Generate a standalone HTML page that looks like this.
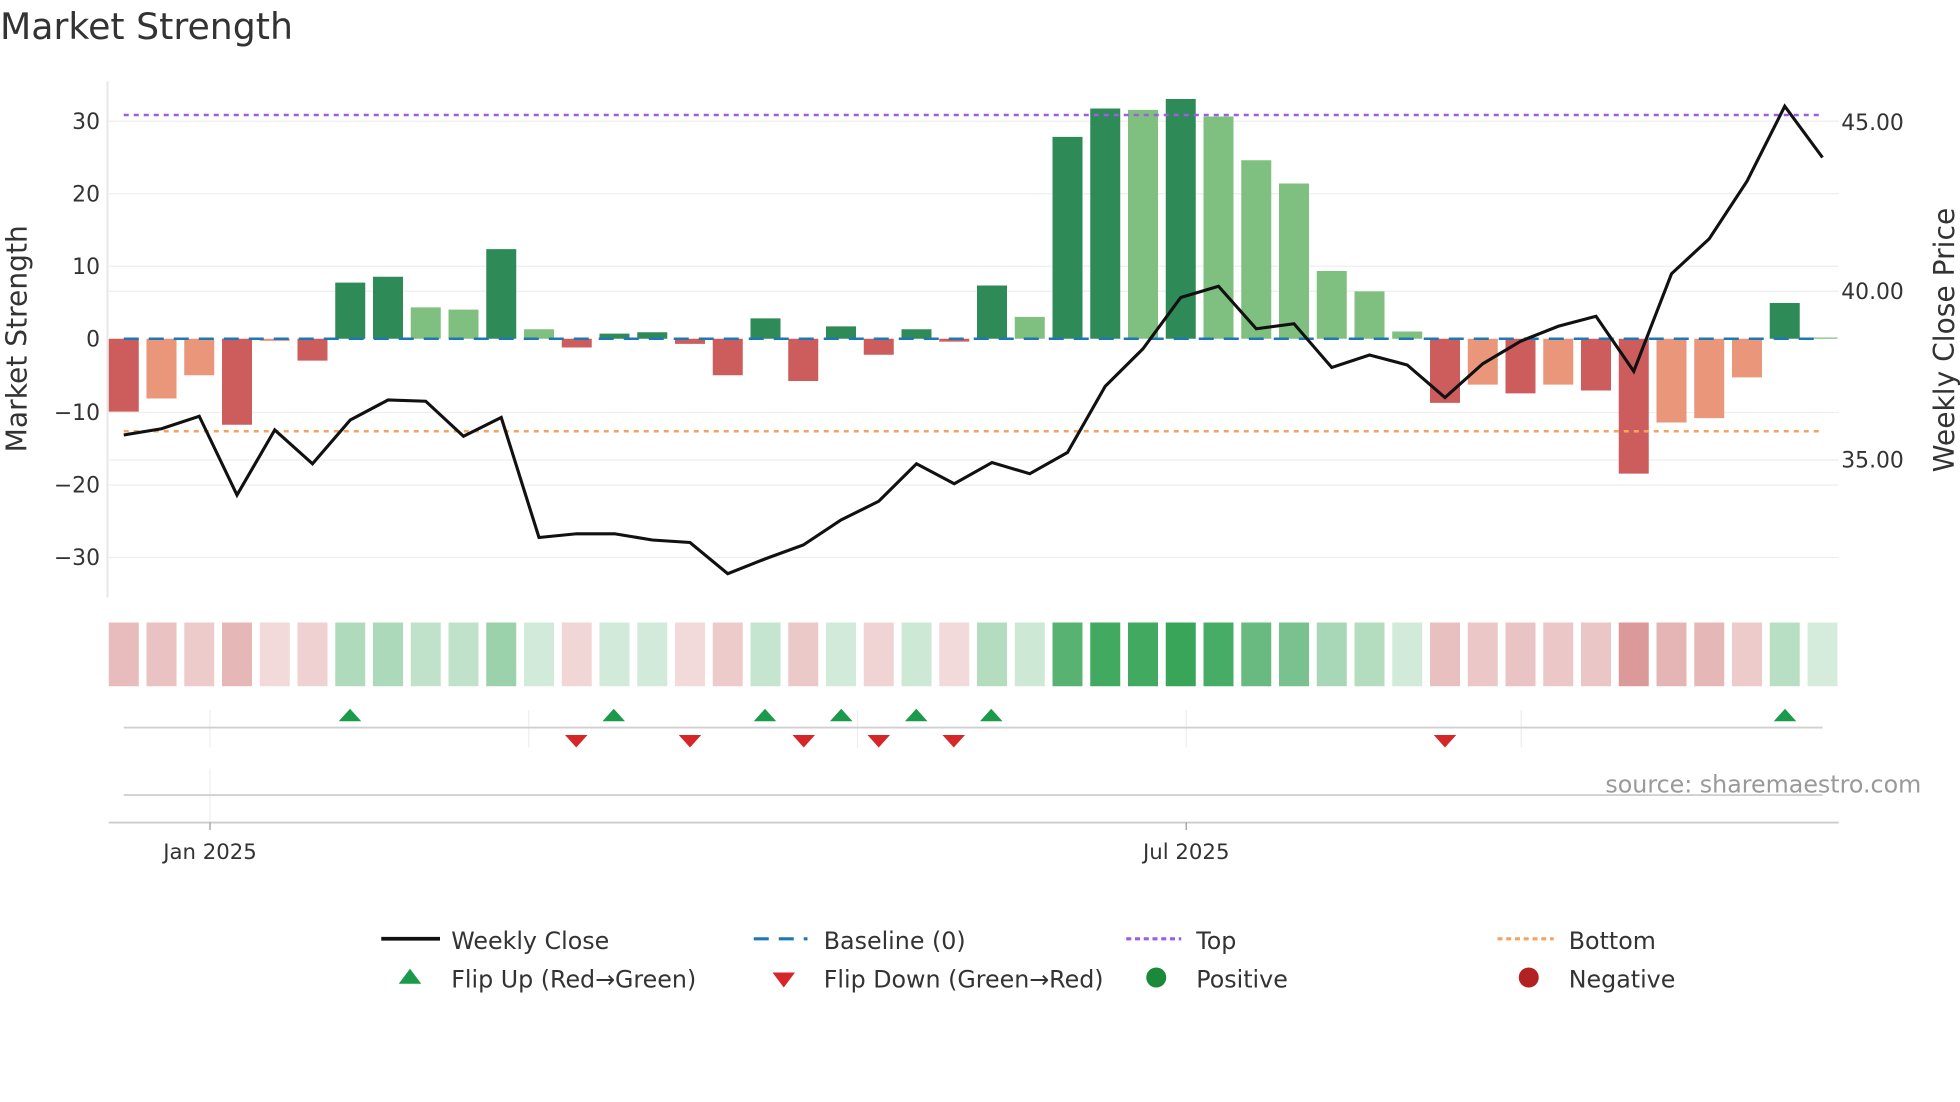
<!DOCTYPE html>
<html><head><meta charset="utf-8"><style>
html,body{margin:0;padding:0;background:#fff;width:1960px;height:1102px;overflow:hidden}
svg{display:block}
text{font-family:"DejaVu Sans","Liberation Sans",sans-serif}
</style></head><body>
<svg width="1960" height="1102" viewBox="0 0 1568 881.6" xmlns="http://www.w3.org/2000/svg">
<text x="0" y="31" font-size="29" fill="#333">Market Strength</text>
<!-- gridlines -->
<g stroke="#eeeeee" stroke-width="1">
<line x1="87" x2="1471" y1="97" y2="97"/><line x1="87" x2="1471" y1="155" y2="155"/><line x1="87" x2="1471" y1="213" y2="213"/><line x1="87" x2="1471" y1="330" y2="330"/><line x1="87" x2="1471" y1="388" y2="388"/><line x1="87" x2="1471" y1="446" y2="446"/>
<line x1="87" x2="1471" y1="233" y2="233"/><line x1="87" x2="1471" y1="368" y2="368"/>
</g>
<line x1="86" x2="86" y1="65" y2="478" stroke="#e6e6e6" stroke-width="1.5"/>
<g font-size="17.5" fill="#333" text-anchor="end">
<text x="80" y="103">30</text><text x="80" y="161">20</text><text x="80" y="219">10</text><text x="80" y="277">0</text><text x="80" y="336">−10</text><text x="80" y="394">−20</text><text x="80" y="452">−30</text>
</g>
<g font-size="17.5" fill="#333">
<text x="1473" y="104">45.00</text><text x="1473" y="239">40.00</text><text x="1473" y="374">35.00</text>
</g>
<text transform="translate(21,271) rotate(-90)" font-size="22.5" fill="#333" text-anchor="middle">Market Strength</text>
<text transform="translate(1563,272) rotate(-90)" font-size="22.5" fill="#333" text-anchor="middle">Weekly Close Price</text>
<!-- bars -->
<g>
<rect x="87" y="271" width="24" height="58.3" fill="#cd5c5c"/>
<rect x="117.2" y="271" width="24" height="47.8" fill="#e9967a"/>
<rect x="147.4" y="271" width="24" height="29.2" fill="#e9967a"/>
<rect x="177.6" y="271" width="24" height="68.8" fill="#cd5c5c"/>
<rect x="207.8" y="271" width="24" height="1.7" fill="#e9967a"/>
<rect x="238" y="271" width="24" height="17.5" fill="#cd5c5c"/>
<rect x="268.2" y="226.1" width="24" height="44.9" fill="#2e8b57"/>
<rect x="298.4" y="221.4" width="24" height="49.6" fill="#2e8b57"/>
<rect x="328.6" y="245.9" width="24" height="25.1" fill="#7fbf7f"/>
<rect x="358.8" y="247.7" width="24" height="23.3" fill="#7fbf7f"/>
<rect x="389" y="199.3" width="24" height="71.7" fill="#2e8b57"/>
<rect x="419.2" y="263.4" width="24" height="7.6" fill="#7fbf7f"/>
<rect x="449.4" y="271" width="24" height="7" fill="#cd5c5c"/>
<rect x="479.6" y="266.9" width="24" height="4.1" fill="#2e8b57"/>
<rect x="509.8" y="265.8" width="24" height="5.2" fill="#2e8b57"/>
<rect x="540" y="271" width="24" height="4.1" fill="#cd5c5c"/>
<rect x="570.2" y="271" width="24" height="29.2" fill="#cd5c5c"/>
<rect x="600.4" y="254.7" width="24" height="16.3" fill="#2e8b57"/>
<rect x="630.6" y="271" width="24" height="33.8" fill="#cd5c5c"/>
<rect x="660.8" y="261.1" width="24" height="9.9" fill="#2e8b57"/>
<rect x="691" y="271" width="24" height="12.8" fill="#cd5c5c"/>
<rect x="721.2" y="263.4" width="24" height="7.6" fill="#2e8b57"/>
<rect x="751.4" y="271" width="24" height="2.3" fill="#cd5c5c"/>
<rect x="781.6" y="228.4" width="24" height="42.6" fill="#2e8b57"/>
<rect x="811.8" y="253.5" width="24" height="17.5" fill="#7fbf7f"/>
<rect x="842" y="109.5" width="24" height="161.5" fill="#2e8b57"/>
<rect x="872.2" y="86.8" width="24" height="184.2" fill="#2e8b57"/>
<rect x="902.4" y="87.9" width="24" height="183.1" fill="#7fbf7f"/>
<rect x="932.6" y="79.2" width="24" height="191.8" fill="#2e8b57"/>
<rect x="962.8" y="93.2" width="24" height="177.8" fill="#7fbf7f"/>
<rect x="993" y="128.2" width="24" height="142.8" fill="#7fbf7f"/>
<rect x="1023.2" y="146.8" width="24" height="124.2" fill="#7fbf7f"/>
<rect x="1053.4" y="216.8" width="24" height="54.2" fill="#7fbf7f"/>
<rect x="1083.6" y="233.1" width="24" height="37.9" fill="#7fbf7f"/>
<rect x="1113.8" y="265.2" width="24" height="5.8" fill="#7fbf7f"/>
<rect x="1144" y="271" width="24" height="51.3" fill="#cd5c5c"/>
<rect x="1174.2" y="271" width="24" height="36.7" fill="#e9967a"/>
<rect x="1204.4" y="271" width="24" height="43.7" fill="#cd5c5c"/>
<rect x="1234.6" y="271" width="24" height="36.7" fill="#e9967a"/>
<rect x="1264.8" y="271" width="24" height="41.4" fill="#cd5c5c"/>
<rect x="1295" y="271" width="24" height="107.9" fill="#cd5c5c"/>
<rect x="1325.2" y="271" width="24" height="67" fill="#e9967a"/>
<rect x="1355.4" y="271" width="24" height="63.5" fill="#e9967a"/>
<rect x="1385.6" y="271" width="24" height="30.9" fill="#e9967a"/>
<rect x="1415.8" y="242.4" width="24" height="28.6" fill="#2e8b57"/>
<rect x="1446" y="270" width="24" height="1" fill="#7fbf7f"/>
</g>
<line x1="99" x2="1458" y1="271" y2="271" stroke="#1f77b4" stroke-width="2" stroke-dasharray="12,8"/>
<line x1="99" x2="1458" y1="92" y2="92" stroke="#9b5fe0" stroke-width="2" stroke-dasharray="4,4"/>
<line x1="99" x2="1458" y1="345" y2="345" stroke="#f4a460" stroke-width="2" stroke-dasharray="4,4"/>
<polyline fill="none" stroke="#111" stroke-width="2.5" stroke-linejoin="miter" points="99,348 129.2,343 159.4,333 189.6,396 219.8,344 250,371 280.2,336 310.4,320 340.6,321 370.8,349 401,334 431.2,430 461.4,427 491.6,427 521.8,432 552,434 582.2,459 612.4,447 642.6,436 672.8,416 703,401 733.2,371 763.4,387 793.6,370 823.8,379 854,362 884.2,309 914.4,279 944.6,238 974.8,229 1005,263 1035.2,259 1065.4,294 1095.6,284 1125.8,292 1156,318 1186.2,291 1216.4,273 1246.6,261 1276.8,253 1307,297 1337.2,219 1367.4,191 1397.6,145 1427.8,85 1458,126"/>
<!-- heatmap -->
<g>
<rect x="87" y="498" width="24" height="51" fill="#be4646" fill-opacity="0.36"/>
<rect x="117.2" y="498" width="24" height="51" fill="#be4646" fill-opacity="0.33"/>
<rect x="147.4" y="498" width="24" height="51" fill="#be4646" fill-opacity="0.28"/>
<rect x="177.6" y="498" width="24" height="51" fill="#be4646" fill-opacity="0.39"/>
<rect x="207.8" y="498" width="24" height="51" fill="#be4646" fill-opacity="0.2"/>
<rect x="238" y="498" width="24" height="51" fill="#be4646" fill-opacity="0.25"/>
<rect x="268.2" y="498" width="24" height="51" fill="#2ea050" fill-opacity="0.38"/>
<rect x="298.4" y="498" width="24" height="51" fill="#2ea050" fill-opacity="0.4"/>
<rect x="328.6" y="498" width="24" height="51" fill="#2ea050" fill-opacity="0.3"/>
<rect x="358.8" y="498" width="24" height="51" fill="#2ea050" fill-opacity="0.3"/>
<rect x="389" y="498" width="24" height="51" fill="#2ea050" fill-opacity="0.48"/>
<rect x="419.2" y="498" width="24" height="51" fill="#2ea050" fill-opacity="0.22"/>
<rect x="449.4" y="498" width="24" height="51" fill="#be4646" fill-opacity="0.22"/>
<rect x="479.6" y="498" width="24" height="51" fill="#2ea050" fill-opacity="0.22"/>
<rect x="509.8" y="498" width="24" height="51" fill="#2ea050" fill-opacity="0.22"/>
<rect x="540" y="498" width="24" height="51" fill="#be4646" fill-opacity="0.2"/>
<rect x="570.2" y="498" width="24" height="51" fill="#be4646" fill-opacity="0.28"/>
<rect x="600.4" y="498" width="24" height="51" fill="#2ea050" fill-opacity="0.27"/>
<rect x="630.6" y="498" width="24" height="51" fill="#be4646" fill-opacity="0.29"/>
<rect x="660.8" y="498" width="24" height="51" fill="#2ea050" fill-opacity="0.22"/>
<rect x="691" y="498" width="24" height="51" fill="#be4646" fill-opacity="0.23"/>
<rect x="721.2" y="498" width="24" height="51" fill="#2ea050" fill-opacity="0.24"/>
<rect x="751.4" y="498" width="24" height="51" fill="#be4646" fill-opacity="0.2"/>
<rect x="781.6" y="498" width="24" height="51" fill="#2ea050" fill-opacity="0.36"/>
<rect x="811.8" y="498" width="24" height="51" fill="#2ea050" fill-opacity="0.24"/>
<rect x="842" y="498" width="24" height="51" fill="#2ea050" fill-opacity="0.8"/>
<rect x="872.2" y="498" width="24" height="51" fill="#2ea050" fill-opacity="0.9"/>
<rect x="902.4" y="498" width="24" height="51" fill="#2ea050" fill-opacity="0.9"/>
<rect x="932.6" y="498" width="24" height="51" fill="#2ea050" fill-opacity="0.95"/>
<rect x="962.8" y="498" width="24" height="51" fill="#2ea050" fill-opacity="0.88"/>
<rect x="993" y="498" width="24" height="51" fill="#2ea050" fill-opacity="0.72"/>
<rect x="1023.2" y="498" width="24" height="51" fill="#2ea050" fill-opacity="0.64"/>
<rect x="1053.4" y="498" width="24" height="51" fill="#2ea050" fill-opacity="0.42"/>
<rect x="1083.6" y="498" width="24" height="51" fill="#2ea050" fill-opacity="0.36"/>
<rect x="1113.8" y="498" width="24" height="51" fill="#2ea050" fill-opacity="0.22"/>
<rect x="1144" y="498" width="24" height="51" fill="#be4646" fill-opacity="0.34"/>
<rect x="1174.2" y="498" width="24" height="51" fill="#be4646" fill-opacity="0.3"/>
<rect x="1204.4" y="498" width="24" height="51" fill="#be4646" fill-opacity="0.32"/>
<rect x="1234.6" y="498" width="24" height="51" fill="#be4646" fill-opacity="0.3"/>
<rect x="1264.8" y="498" width="24" height="51" fill="#be4646" fill-opacity="0.31"/>
<rect x="1295" y="498" width="24" height="51" fill="#be4646" fill-opacity="0.55"/>
<rect x="1325.2" y="498" width="24" height="51" fill="#be4646" fill-opacity="0.4"/>
<rect x="1355.4" y="498" width="24" height="51" fill="#be4646" fill-opacity="0.39"/>
<rect x="1385.6" y="498" width="24" height="51" fill="#be4646" fill-opacity="0.28"/>
<rect x="1415.8" y="498" width="24" height="51" fill="#2ea050" fill-opacity="0.34"/>
<rect x="1446" y="498" width="24" height="51" fill="#2ea050" fill-opacity="0.2"/>
</g>
<!-- markers region -->
<g stroke="#eeeeee" stroke-width="1">
<line x1="168" x2="168" y1="568" y2="598"/><line x1="423" x2="423" y1="568" y2="598"/><line x1="686" x2="686" y1="568" y2="598"/><line x1="949" x2="949" y1="568" y2="598"/><line x1="1217" x2="1217" y1="568" y2="598"/>
<line x1="168" x2="168" y1="615" y2="658"/>
</g>
<line x1="99" x2="1458" y1="582" y2="582" stroke="#d0d0d0" stroke-width="1.5"/>
<line x1="99" x2="1458" y1="636" y2="636" stroke="#d0d0d0" stroke-width="1.5"/>
<line x1="87" x2="1471" y1="658" y2="658" stroke="#cccccc" stroke-width="1.5"/>
<line x1="168" x2="168" y1="658" y2="664" stroke="#999"/><line x1="949" x2="949" y1="658" y2="664" stroke="#999"/>
<g fill="#1a9a4a">
<path d="M271,577 L289,577 L280,567Z"/><path d="M482,577 L500,577 L491,567Z"/><path d="M603,577 L621,577 L612,567Z"/><path d="M664,577 L682,577 L673,567Z"/><path d="M724,577 L742,577 L733,567Z"/><path d="M784,577 L802,577 L793,567Z"/><path d="M1419,577 L1437,577 L1428,567Z"/>
</g>
<g fill="#d62728">
<path d="M452,588 L470,588 L461,598Z"/><path d="M543,588 L561,588 L552,598Z"/><path d="M634,588 L652,588 L643,598Z"/><path d="M694,588 L712,588 L703,598Z"/><path d="M754,588 L772,588 L763,598Z"/><path d="M1147,588 L1165,588 L1156,598Z"/>
</g>
<text x="1537" y="634" font-size="19" fill="#999" text-anchor="end">source: sharemaestro.com</text>
<g font-size="17" fill="#333" text-anchor="middle">
<text x="168" y="687">Jan 2025</text><text x="949" y="687">Jul 2025</text>
</g>
<!-- legend -->
<g font-size="19" fill="#333">
<line x1="305" x2="352" y1="751" y2="751" stroke="#111" stroke-width="3"/>
<text x="361" y="759">Weekly Close</text>
<line x1="603" x2="646" y1="751" y2="751" stroke="#1f77b4" stroke-width="2.5" stroke-dasharray="12,8"/>
<text x="659" y="759">Baseline (0)</text>
<line x1="901" x2="945" y1="751" y2="751" stroke="#9b5fe0" stroke-width="2.5" stroke-dasharray="4,3"/>
<text x="957" y="759">Top</text>
<line x1="1198" x2="1243" y1="751" y2="751" stroke="#f4a460" stroke-width="2.5" stroke-dasharray="4,3"/>
<text x="1255" y="759">Bottom</text>
<path d="M319,787 L337,787 L328,775Z" fill="#1a9a4a"/>
<text x="361" y="790">Flip Up (Red→Green)</text>
<path d="M618,778 L636,778 L627,790Z" fill="#d62728"/>
<text x="659" y="790">Flip Down (Green→Red)</text>
<circle cx="925" cy="782" r="8" fill="#1a8a3a"/>
<text x="957" y="790">Positive</text>
<circle cx="1223" cy="782" r="8" fill="#b22222"/>
<text x="1255" y="790">Negative</text>
</g>
</svg>
</body></html>
